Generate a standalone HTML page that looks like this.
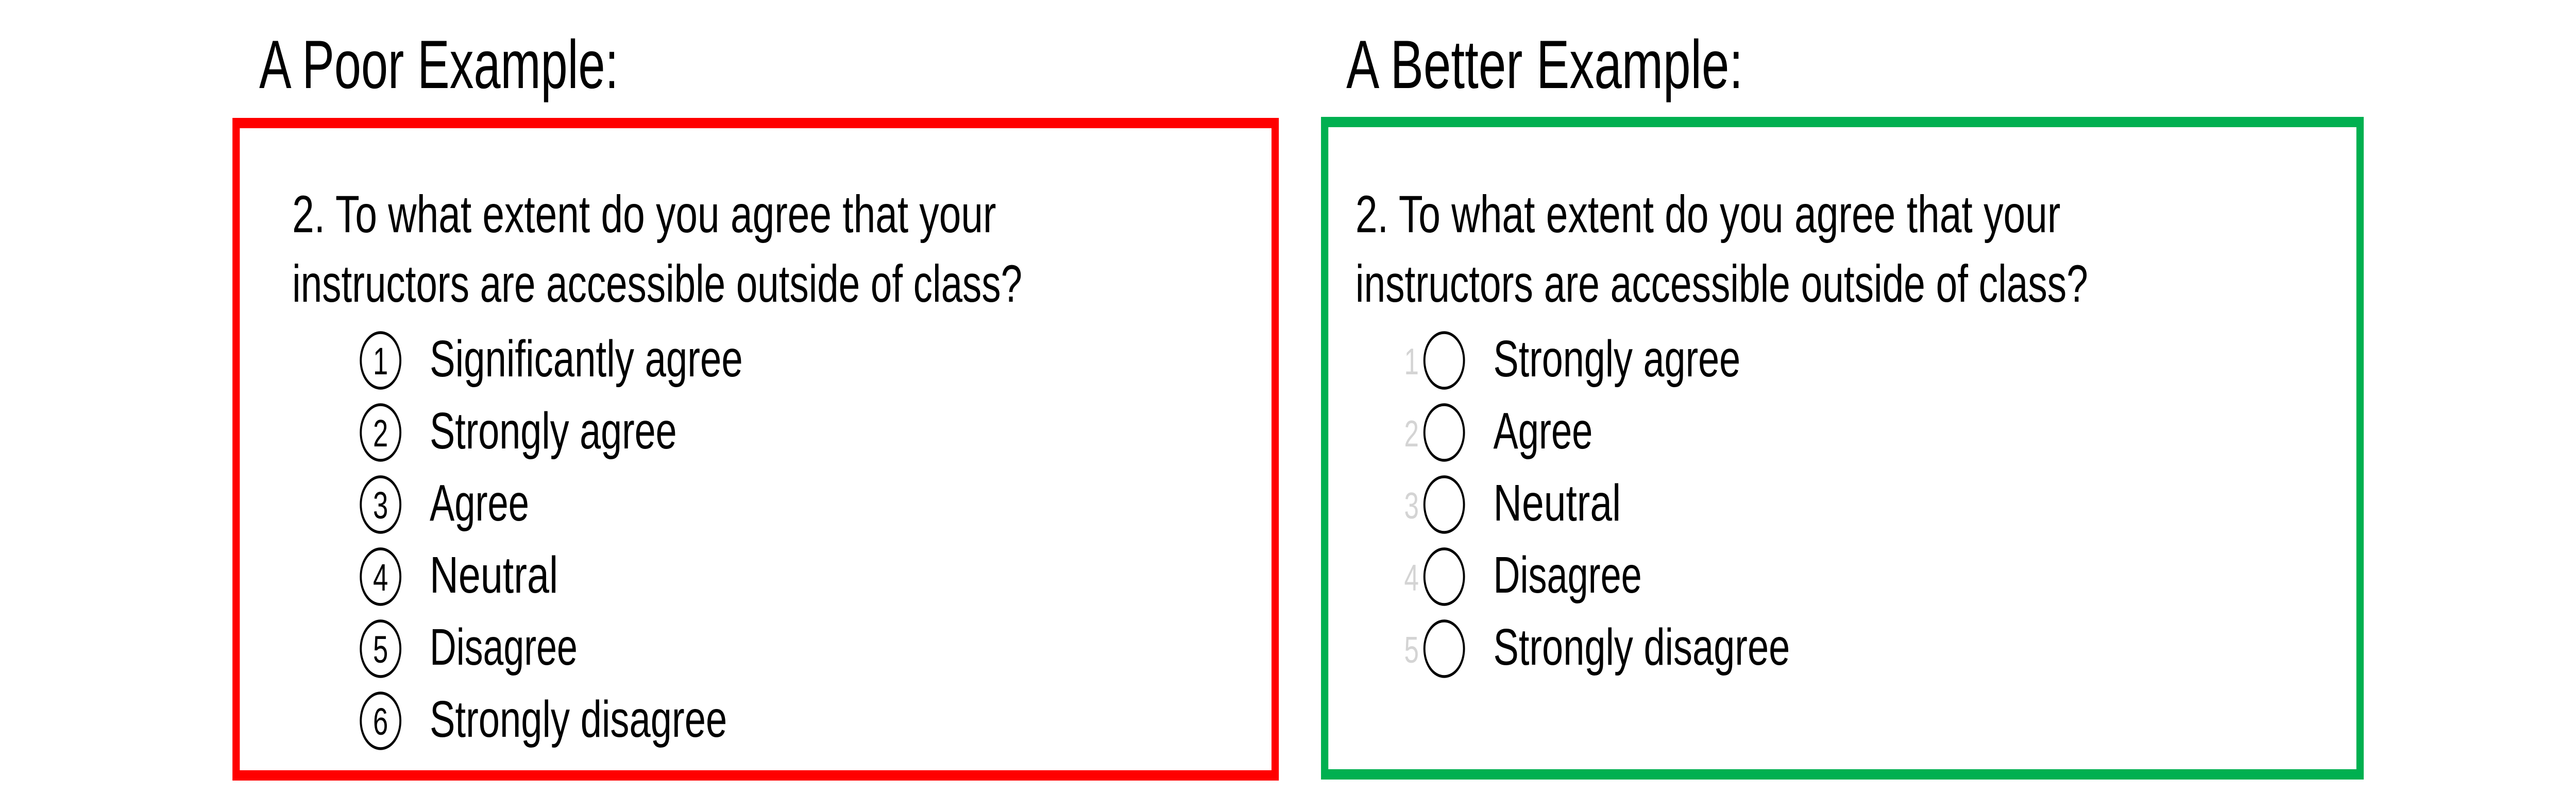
<!DOCTYPE html>
<html><head><meta charset="utf-8"><style>
html,body{margin:0;padding:0;background:#fff;width:100%;height:100%;overflow:hidden}
svg{display:block;width:100vw;height:100vh}
text{font-family:"Liberation Sans",sans-serif;fill:#000}
</style></head><body>
<svg viewBox="0 0 7026 1546" preserveAspectRatio="none" xmlns="http://www.w3.org/2000/svg">
<rect x="0" y="0" width="7026" height="1546" fill="#fff"/>
<!-- Left -->
<text x="707" y="171" font-size="133" textLength="980" lengthAdjust="spacingAndGlyphs">A Poor Example:</text>
<rect x="644" y="239" width="2834" height="1267" fill="none" stroke="#ff0000" stroke-width="20"/>
<text x="797" y="451" font-size="102" textLength="1920" lengthAdjust="spacingAndGlyphs">2. To what extent do you agree that your</text>
<text x="797" y="586" font-size="102" textLength="1991" lengthAdjust="spacingAndGlyphs">instructors are accessible outside of class?</text>
<g fill="none" stroke="#000" stroke-width="5.5">
<circle cx="1038" cy="700" r="54"/><circle cx="1038" cy="840" r="54"/><circle cx="1038" cy="980" r="54"/>
<circle cx="1038" cy="1120" r="54"/><circle cx="1038" cy="1260" r="54"/><circle cx="1038" cy="1400" r="54"/>
</g>
<g font-size="74" text-anchor="middle">
<text x="1038" y="727">1</text><text x="1038" y="867">2</text><text x="1038" y="1007">3</text>
<text x="1038" y="1147">4</text><text x="1038" y="1287">5</text><text x="1038" y="1427">6</text>
</g>
<g font-size="100">
<text x="1172" y="731" textLength="854" lengthAdjust="spacingAndGlyphs">Significantly agree</text>
<text x="1172" y="871" textLength="674" lengthAdjust="spacingAndGlyphs">Strongly agree</text>
<text x="1172" y="1011" textLength="271" lengthAdjust="spacingAndGlyphs">Agree</text>
<text x="1172" y="1151" textLength="350" lengthAdjust="spacingAndGlyphs">Neutral</text>
<text x="1172" y="1291" textLength="403" lengthAdjust="spacingAndGlyphs">Disagree</text>
<text x="1172" y="1431" textLength="811" lengthAdjust="spacingAndGlyphs">Strongly disagree</text>
</g>
<!-- Right -->
<text x="3672" y="171" font-size="133" textLength="1082" lengthAdjust="spacingAndGlyphs">A Better Example:</text>
<rect x="3613" y="237" width="2824" height="1267" fill="none" stroke="#00b050" stroke-width="20"/>
<text x="3697" y="451" font-size="102" textLength="1923" lengthAdjust="spacingAndGlyphs">2. To what extent do you agree that your</text>
<text x="3697" y="586" font-size="102" textLength="1998" lengthAdjust="spacingAndGlyphs">instructors are accessible outside of class?</text>
<g fill="none" stroke="#000" stroke-width="5.5">
<circle cx="3939" cy="700" r="54"/><circle cx="3939" cy="840" r="54"/><circle cx="3939" cy="980" r="54"/>
<circle cx="3939" cy="1120" r="54"/><circle cx="3939" cy="1260" r="54"/>
</g>
<g font-size="72" text-anchor="end">
<text x="3870" y="727" style="fill:#d4d4d4">1</text><text x="3870" y="867" style="fill:#d4d4d4">2</text><text x="3870" y="1007" style="fill:#d4d4d4">3</text>
<text x="3870" y="1147" style="fill:#d4d4d4">4</text><text x="3870" y="1287" style="fill:#d4d4d4">5</text>
</g>
<g font-size="100">
<text x="4073" y="731" textLength="674" lengthAdjust="spacingAndGlyphs">Strongly agree</text>
<text x="4073" y="871" textLength="271" lengthAdjust="spacingAndGlyphs">Agree</text>
<text x="4073" y="1011" textLength="348" lengthAdjust="spacingAndGlyphs">Neutral</text>
<text x="4073" y="1151" textLength="405" lengthAdjust="spacingAndGlyphs">Disagree</text>
<text x="4073" y="1291" textLength="809" lengthAdjust="spacingAndGlyphs">Strongly disagree</text>
</g>
</svg>
</body></html>
